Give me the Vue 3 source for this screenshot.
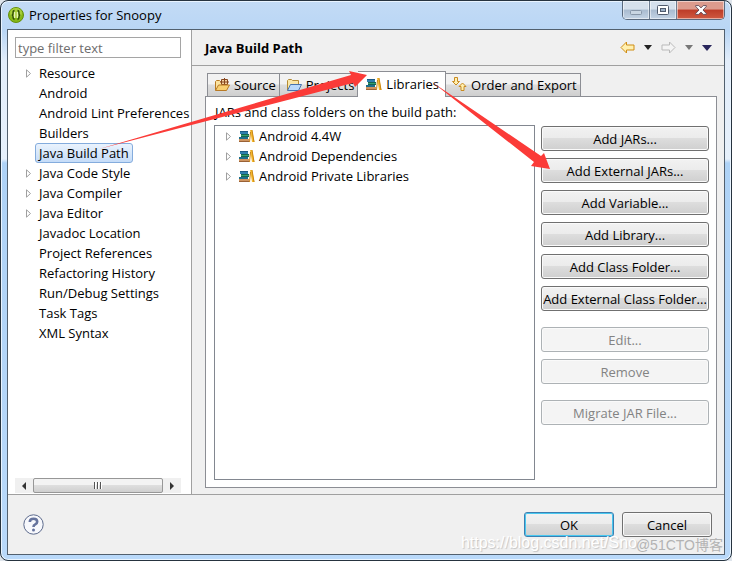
<script setup>
import { ref } from "vue";

const filterText = ref("");
const selectedPage = ref("Java Build Path");
const activeTab = ref("Libraries");

const pages = [
  { name: "Resource", expandable: true },
  { name: "Android" },
  { name: "Android Lint Preferences" },
  { name: "Builders" },
  { name: "Java Build Path" },
  { name: "Java Code Style", expandable: true },
  { name: "Java Compiler", expandable: true },
  { name: "Java Editor", expandable: true },
  { name: "Javadoc Location" },
  { name: "Project References" },
  { name: "Refactoring History" },
  { name: "Run/Debug Settings" },
  { name: "Task Tags" },
  { name: "XML Syntax" },
];

const tabs = ["Source", "Projects", "Libraries", "Order and Export"];

const libraries = [
  "Android 4.4W",
  "Android Dependencies",
  "Android Private Libraries",
];

// buttons are grouped, with a wider gap between the groups
const actionGroups = [
  [
    "Add JARs...",
    "Add External JARs...",
    "Add Variable...",
    "Add Library...",
    "Add Class Folder...",
    "Add External Class Folder...",
  ],
  ["Edit...", "Remove"],
  ["Migrate JAR File..."],
];
</script>

<template>
  <div class="window">
    <!-- shared icon shapes -->
    <svg class="defs" width="0" height="0" aria-hidden="true">
      <symbol id="books" viewBox="0 0 16 16">
        <path d="M1 3h8v3H1z" fill="#2f7fae" />
        <path d="M1 3.5h8" stroke="#1c5a86" />
        <path d="M2 6h8v3H2z" fill="#35a06c" />
        <path d="M2 6.5h8M2 8.5h8" stroke="#176350" />
        <path d="M0 9h9v2H0z" fill="#1d6f8c" />
        <path d="M0 11h10v3H0z" fill="#cf9460" />
        <path d="M0 13.5h10" stroke="#9a6236" />
        <path d="M11 2h2l2.5 12H13z" fill="#f5b92e" />
        <path d="M13 2l2 12M11.5 4L10.5 14" fill="none" stroke="#c98512" />
      </symbol>
      <symbol id="tree-arrow" viewBox="0 0 7 9">
        <path d="M1.5 .8v7.4L5.5 4.5z" fill="#fff" stroke="#a0a0a0" />
      </symbol>
    </svg>

    <header class="title-bar">
      <svg class="app-icon" viewBox="0 0 16 16">
        <circle cx="8" cy="8" r="7.5" fill="#86b817" stroke="#648f0c" />
        <ellipse cx="8" cy="6" rx="6" ry="5" fill="#a9cf3b" />
        <path
          d="M6.5 3.5Q5 3.5 5 6T3.8 8Q5 8 5 10t1.5 2.5M9.5 3.5Q11 3.5 11 6t1.2 2Q11 8 11 10t-1.5 2.5"
          fill="none"
          stroke="#304d08"
          stroke-width="1.4"
        />
        <path d="M6.7 5v6M9.3 5v6" stroke="#f3fbd3" />
      </svg>
      <h1 class="title">Properties for Snoopy</h1>
      <div class="caption-buttons">
        <button type="button" class="caption minimize" aria-label="Minimize">
          <svg width="12" height="5" viewBox="0 0 12 5">
            <rect x=".5" y=".5" width="11" height="4" rx="1" fill="#c9d6e3" stroke="#8796a8" />
          </svg>
        </button>
        <button type="button" class="caption maximize" aria-label="Maximize">
          <svg width="12" height="10" viewBox="0 0 12 10">
            <rect x=".5" y=".5" width="11" height="9" rx="1" fill="#fff" stroke="#505b6d" />
            <rect x="3.5" y="3.5" width="5" height="3" fill="#9db0c6" stroke="#505b6d" />
          </svg>
        </button>
        <button type="button" class="caption close" aria-label="Close">
          <svg width="12" height="10" viewBox="0 0 12 10">
            <path
              d="M.7.6h3.1L6 2.9 8.2.6h3.1v.9L8 5l3.3 3.5v.9H8.2L6 7.1 3.8 9.4H.7v-.9L4 5 .7 1.5z"
              fill="#fff"
              stroke="#5d4654"
              stroke-width=".9"
            />
          </svg>
        </button>
      </div>
    </header>

    <main class="dialog">
      <div class="body">
        <nav class="sidebar">
          <input
            v-model="filterText"
            type="text"
            class="filter"
            placeholder="type filter text"
            aria-label="type filter text"
          />
          <ul class="page-tree">
            <li v-for="page in pages" :key="page.name" class="page-row">
              <span class="twisty">
                <svg v-if="page.expandable" width="7" height="9">
                  <use href="#tree-arrow" />
                </svg>
              </span>
              <button
                type="button"
                class="page-name"
                :class="{ selected: page.name === selectedPage }"
                @click="selectedPage = page.name"
              >
                {{ page.name }}
              </button>
            </li>
          </ul>
          <div class="scrollbar">
            <button type="button" class="scroll-arrow" aria-label="Scroll left">
              <svg width="4" height="8"><path d="M4 0v8L0 4z" fill="#333" /></svg>
            </button>
            <div class="scroll-thumb">
              <svg width="8" height="7">
                <path d="M.5 0v7M3.5 0v7M6.5 0v7" stroke="#555" />
                <path d="M1.5 0v7M4.5 0v7M7.5 0v7" stroke="#fff" />
              </svg>
            </div>
            <button type="button" class="scroll-arrow" aria-label="Scroll right">
              <svg width="4" height="8"><path d="M0 0v8l4-4z" fill="#333" /></svg>
            </button>
          </div>
        </nav>

        <section class="content">
          <div class="page-header">
            <h2>Java Build Path</h2>
            <div class="history">
              <button type="button" aria-label="Back">
                <svg width="15" height="13" viewBox="0 0 15 13">
                  <path d="M1 6.5l5.5-5.5v3H14v5H6.5v3z" fill="#fff0b0" stroke="#cf8d14" />
                </svg>
              </button>
              <button type="button" aria-label="Back menu">
                <svg width="8" height="5"><path d="M0 0h8L4 5z" fill="#222" /></svg>
              </button>
              <button type="button" aria-label="Forward" disabled>
                <svg width="15" height="13" viewBox="0 0 15 13">
                  <path d="M14 6.5L8.5 1v3H1v5h7.5v3z" fill="#f4f4f4" stroke="#b9b9b9" />
                </svg>
              </button>
              <button type="button" aria-label="Forward menu" disabled>
                <svg width="8" height="5"><path d="M0 0h8L4 5z" fill="#777" /></svg>
              </button>
              <button type="button" aria-label="Menu">
                <svg width="10" height="6"><path d="M0 0h10L5 6z" fill="#29265c" /></svg>
              </button>
            </div>
          </div>

          <div class="build-path">
            <div class="tabs" role="tablist">
              <button
                v-for="tab in tabs"
                :key="tab"
                type="button"
                role="tab"
                class="tab"
                :class="{ active: tab === activeTab }"
                :aria-selected="tab === activeTab"
                @click="activeTab = tab"
              >
                <svg v-if="tab === 'Source'" class="icon" viewBox="0 0 16 16">
                  <path d="M1.5 13V4.5l1-1h3l1 1H12v8z" fill="#fbe3a0" stroke="#b87a25" />
                  <path d="M7.5 2.5h6v5h-6zM10.5 1v7M6 5h9" fill="#f4d2a2" stroke="#87471e" />
                  <path d="M1.5 13.5l3-5.5h11l-3 5.5z" fill="#f8cf71" stroke="#b87a25" />
                </svg>
                <svg v-else-if="tab === 'Projects'" class="icon" viewBox="0 0 16 16">
                  <path d="M1.5 13V3.5l1-1h3l1 1h6V13z" fill="#fae7a8" stroke="#b48b35" />
                  <path d="M1.5 13.5l3-6h11l-3 6z" fill="#b9d9fb" stroke="#4773ad" />
                </svg>
                <svg v-else-if="tab === 'Libraries'" class="icon">
                  <use href="#books" />
                </svg>
                <svg v-else class="icon" viewBox="0 0 16 16">
                  <path d="M3.5 .5h3v4h2L5 8 1.5 4.5h2z" fill="#fff0b0" stroke="#c98b22" />
                  <path d="M10 13.5h3v-4h2L11.5 6 8 9.5h2z" fill="#fff0b0" stroke="#c98b22" />
                </svg>
                <span>{{ tab }}</span>
              </button>
            </div>

            <div class="tab-panel" role="tabpanel">
              <p class="caption-text">JARs and class folders on the build path:</p>
              <div class="panel-row">
                <ul class="library-list">
                  <li v-for="library in libraries" :key="library">
                    <svg width="7" height="9"><use href="#tree-arrow" /></svg>
                    <svg class="icon"><use href="#books" /></svg>
                    <span>{{ library }}</span>
                  </li>
                </ul>
                <div class="actions">
                  <div v-for="(group, i) in actionGroups" :key="i" class="action-group">
                    <button
                      v-for="action in group"
                      :key="action"
                      type="button"
                      class="btn"
                      :disabled="i > 0"
                    >
                      {{ action }}
                    </button>
                  </div>
                </div>
              </div>
            </div>
          </div>
        </section>
      </div>

      <footer class="footer">
        <button type="button" class="help" aria-label="Help">
          <svg width="21" height="21" viewBox="0 0 21 21">
            <circle cx="10.5" cy="10.5" r="9.7" fill="#f7f8fc" stroke="#5c6a8c" />
            <path
              d="M6.8 8Q6.8 4.8 10.5 4.8T14.2 7.8Q14.2 9.5 12.3 10.4T10.5 13"
              fill="none"
              stroke="#65739d"
              stroke-width="2.6"
            />
            <circle cx="10.5" cy="16" r="1.5" fill="#65739d" />
          </svg>
        </button>
        <div class="footer-buttons">
          <button type="button" class="btn primary">OK</button>
          <button type="button" class="btn">Cancel</button>
        </div>
      </footer>
    </main>

    <!-- arrows drawn over the dialog -->
    <svg class="arrows" width="732" height="561" viewBox="0 0 732 561" aria-hidden="true">
      <path d="M99 149L351 75 349 71 367 75 355 87 353 83z" fill="#fb3b38" />
      <path d="M432 82L541 156 544 153 550 169 531 166 534 162z" fill="#fb3b38" />
    </svg>
    <span class="watermark blog">https://blog.csdn.net/Sno</span>
    <span class="watermark site">@51CTO博客</span>
  </div>
</template>

<style>
body {
  margin: 0;
  background: #dfe5ec;
}
</style>

<style scoped>
* {
  box-sizing: border-box;
}

.window {
  position: relative;
  display: flex;
  flex-direction: column;
  height: 100vh;
  padding: 0 6px 5px;
  overflow: hidden;
  border: 1px solid #26333f;
  border-radius: 8px;
  background: linear-gradient(#c3dbf5, #b9d6f5 30px, #e2edfa 60px, #e6f0fb 158px, #aed2f6 162px, #b9d9fa);
  box-shadow: inset 0 0 0 1px #e9f4ff;
  font-family: "Open Sans", "Noto Sans CJK SC", sans-serif;
  font-size: 13px;
  line-height: 20px;
  color: #000;
}

button {
  margin: 0;
  padding: 0;
  border: 0;
  background: none;
  color: inherit;
  font: inherit;
}

ul {
  margin: 0;
  padding: 0;
  list-style: none;
}

svg {
  display: block;
  flex: none;
}

.defs {
  position: absolute;
}

.icon {
  width: 16px;
  height: 16px;
}

/* Title bar */
.title-bar {
  display: flex;
  align-items: flex-start;
  height: 28px;
  flex: none;
}

.app-icon {
  width: 16px;
  height: 16px;
  margin: 6px 5px 0 1px;
}

.title {
  flex: 1;
  margin: 4px 0 0;
  font-size: 13px;
  font-weight: 400;
}

.caption-buttons {
  display: flex;
  border: 1px solid #59697d;
  border-top: 0;
  border-radius: 0 0 5px 5px;
  overflow: hidden;
}

.caption {
  display: grid;
  place-items: center;
  width: 27px;
  height: 18px;
  border-right: 1px solid #6c7c90;
  background: linear-gradient(#d5e0ec 45%, #a9bbcf 50%, #c3d3e5);
  box-shadow: inset 0 0 0 1px rgba(255, 255, 255, 0.5);
}

.minimize {
  padding-top: 4px;
}

.close {
  width: 47px;
  border-right: 0;
  background: linear-gradient(#dc9b8d 45%, #bd3c28 50%, #cf5a41);
}

/* Dialog */
.dialog {
  display: flex;
  flex: 1;
  flex-direction: column;
  min-height: 0;
  border: 1px solid #52606e;
  background: #f0f0f0;
}

.body {
  display: flex;
  flex: 1;
  min-height: 0;
  border-bottom: 1px solid #a0a0a0;
}

.sidebar {
  display: flex;
  flex-direction: column;
  flex: none;
  width: 184px;
  padding: 7px 10px 1px 7px;
  border-right: 1px solid #a0a0a0;
  background: #fff;
}

.filter {
  width: 100%;
  height: 21px;
  padding: 0 2px;
  border: 1px solid #a5a5a5;
  background: #fff;
  font: inherit;
  outline: 0;
}

.filter::placeholder {
  color: #6d6d6d;
  opacity: 1;
}

.page-tree {
  flex: 1;
  padding-top: 5px;
}

.page-row {
  display: flex;
  align-items: center;
  height: 20px;
}

.twisty {
  flex: none;
  width: 10px;
  margin-left: 10px;
}

.page-name {
  height: 20px;
  padding: 0 3px;
  border: 1px solid transparent;
  border-radius: 3px;
  line-height: 18px;
  white-space: nowrap;
}

.page-name.selected {
  border-color: #84acdd;
  background: linear-gradient(#eaf3fd, #c5dcf8);
}

.scrollbar {
  display: flex;
  height: 15px;
  background: #f0f0f0;
}

.scroll-arrow {
  display: grid;
  place-items: center;
  width: 18px;
}

.scroll-thumb {
  display: grid;
  place-items: center;
  flex: 1;
  border: 1px solid #979797;
  border-radius: 2px;
  background: linear-gradient(#f3f3f3 45%, #dedede 50%, #cfcfcf);
}

/* Content */
.content {
  display: flex;
  flex: 1;
  flex-direction: column;
  min-width: 0;
}

.page-header {
  display: flex;
  align-items: center;
  justify-content: space-between;
  height: 36px;
  padding: 0 12px 0 13px;
  border-bottom: 1px solid #a0a0a0;
}

.page-header h2 {
  margin: 0;
  font-size: 13px;
  font-weight: 700;
}

.history {
  display: flex;
  align-items: center;
  gap: 9px;
}

.build-path {
  display: flex;
  flex: 1;
  flex-direction: column;
  padding: 5px 7px 6px 13px;
}

.tabs {
  display: flex;
  align-items: flex-end;
  height: 25px;
  padding-left: 2px;
}

.tab {
  display: flex;
  align-items: center;
  gap: 4px;
  height: 23px;
  padding: 0 3px 0 6px;
  border: 1px solid #8c8e94;
  border-bottom: 0;
  border-left-width: 0;
  background: linear-gradient(#f2f2f2 45%, #dddddd 50%, #cfcfcf);
  white-space: nowrap;
}

.tab:first-child {
  border-left-width: 1px;
}

.tab:last-child {
  padding-left: 5px;
}

/* the open tab covers the top edge of the panel */
.tab.active {
  position: relative;
  height: 26px;
  margin-bottom: -1px;
  padding: 0 6px 2px 8px;
  background: #fff;
}

.tab-panel {
  display: flex;
  flex: 1;
  flex-direction: column;
  padding: 5px 7px 7px 8px;
  border: 1px solid #8c8e94;
  background: #fff;
}

.caption-text {
  margin: 0 0 3px;
  padding-left: 1px;
}

.panel-row {
  display: flex;
  flex: 1;
  gap: 6px;
}

.library-list {
  flex: 1;
  border: 1px solid #828790;
}

.library-list li {
  display: flex;
  align-items: center;
  height: 20px;
  padding-left: 10px;
}

.library-list .icon {
  margin: 0 4px 0 7px;
}

.actions {
  display: flex;
  flex-direction: column;
  flex: none;
  gap: 16px;
  width: 168px;
  padding-top: 1px;
}

.action-group {
  display: flex;
  flex-direction: column;
  gap: 7px;
}

.btn {
  height: 25px;
  border: 1px solid #707070;
  border-radius: 3px;
  background: linear-gradient(#f2f2f2, #ebebeb 50%, #dddddd 50%, #cfcfcf);
  box-shadow: inset 0 0 0 1px #fafafa;
  line-height: 22px;
  white-space: nowrap;
}

.btn:disabled {
  border-color: #adb2b5;
  background: #f4f4f4;
  color: #838383;
}

.btn.primary {
  border-color: #3c7fb1;
  box-shadow: inset 0 0 0 1px #48c8f0;
}

/* Footer */
.footer {
  display: flex;
  align-items: center;
  justify-content: space-between;
  height: 59px;
  padding: 0 12px 0 15px;
}

.footer-buttons {
  display: flex;
  gap: 8px;
}

.footer-buttons .btn {
  width: 90px;
}

/* Overlays */
.arrows {
  position: absolute;
  top: -1px;
  left: -1px;
  pointer-events: none;
}

.watermark {
  position: absolute;
  font-family: "Liberation Sans", "Noto Sans CJK SC", sans-serif;
  white-space: nowrap;
  pointer-events: none;
}

.blog {
  right: 94px;
  bottom: 7px;
  color: #fff;
  font-size: 16px;
  text-shadow: 1px 1px 1px #c4c4c4;
}

.site {
  right: 8px;
  bottom: 5px;
  color: #b3b3b3;
  font-size: 14px;
}
</style>
